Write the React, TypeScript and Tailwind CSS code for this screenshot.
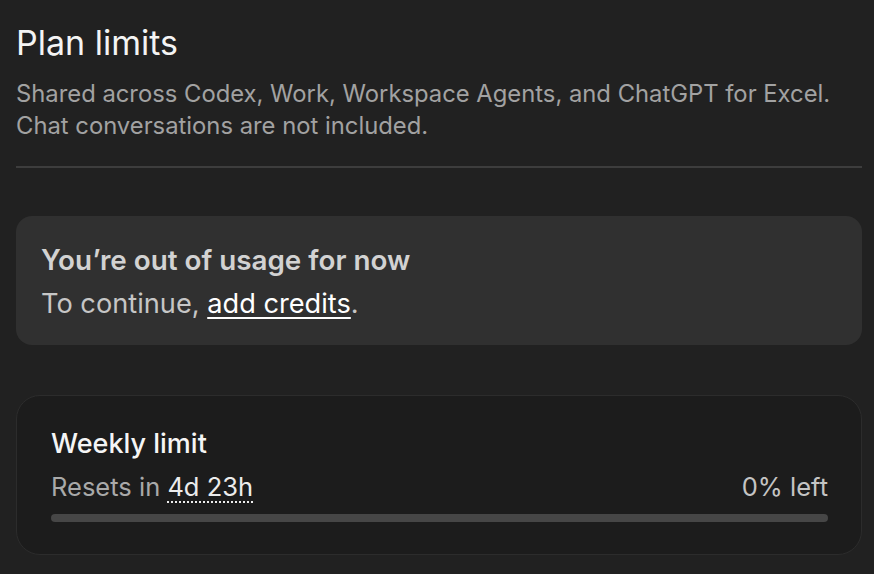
const App = () => {
  return (
    <div className="min-h-[574px] w-full bg-[#212121] pl-4 pr-3 pt-[23px] text-white" style={{ fontFamily: 'Inter, "Noto Sans", sans-serif' }}>
      <h1 className="text-[34px] font-normal leading-[40px] text-[#f4f4f4]">Plan limits</h1>
      <p className="mt-[15px] text-[23.8px] leading-[32px] text-[#a2a2a2]">
        Shared across Codex, Work, Workspace Agents, and ChatGPT for Excel.
        <br />
        Chat conversations are not included.
      </p>
      <div className="mt-[24px] h-[2px] w-full bg-[#3d3d3d]"></div>

      <div className="mt-[48px] rounded-[16px] bg-[#303030] px-[25px] pt-[26px] pb-[23px]">
        <div className="text-[27.8px] font-semibold leading-[36px] text-[#d2d2d2]">You’re out of usage for now</div>
        <div className="mt-[8px] text-[27.2px] leading-[36px] text-[#c6c6c6]">
          To continue, <span className="text-white underline decoration-2 underline-offset-[4px]">add credits</span>.
        </div>
      </div>

      <div className="mt-[50px] rounded-[24px] border border-[#2c2c2c] bg-[#1c1c1c] pl-[34px] pr-[33px] pt-[30px] pb-[32px]">
        <div className="text-[27px] font-medium leading-[36px] text-[#f5f5f5]">Weekly limit</div>
        <div className="mt-[7px] flex items-center justify-between text-[25.5px] leading-[36px] text-[#a9a9a9]">
          <span>
            Resets in{" "}
            <span className="text-[#ececec] underline decoration-dotted decoration-2 underline-offset-[5px]">4d 23h</span>
          </span>
          <span className="text-[#c4c4c4]">0% left</span>
        </div>
        <div className="mt-[9px] h-[8px] w-full rounded-full bg-[#464646]"></div>
      </div>
    </div>
  )
}

export default App
